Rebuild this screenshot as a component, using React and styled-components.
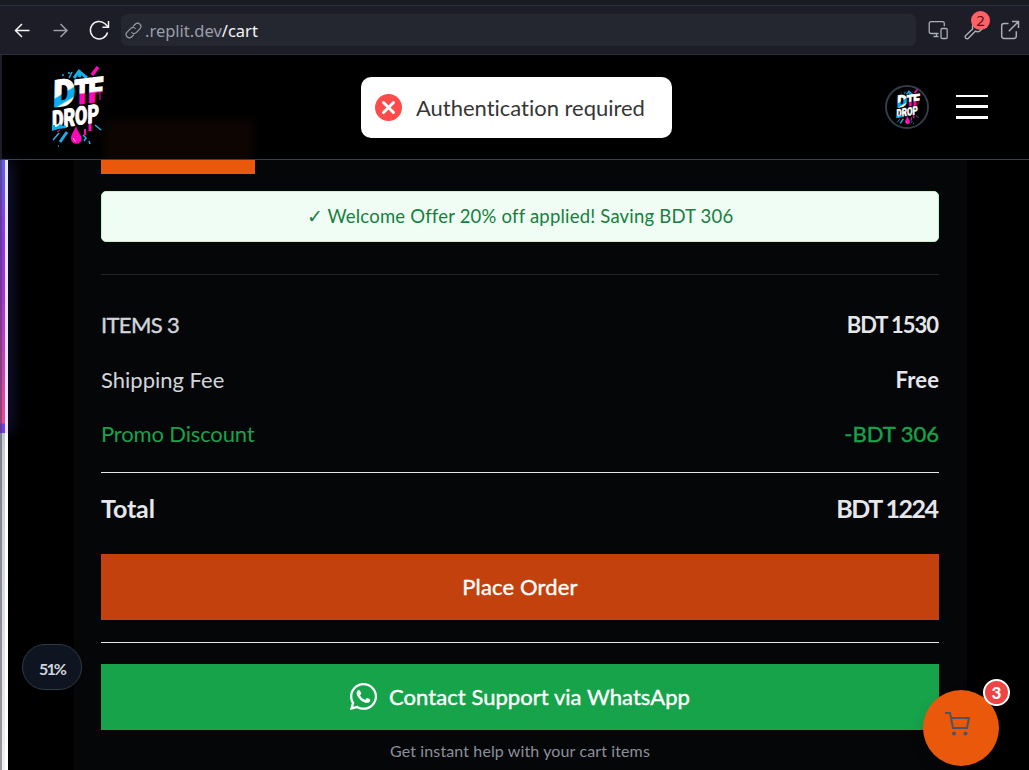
import React from "react";
import styled, { createGlobalStyle, css } from "styled-components";
import { FaWhatsapp } from "react-icons/fa";

const GlobalStyle = createGlobalStyle`
  * { box-sizing: border-box; }
  body {
    margin: 0;
    background: #000;
    color: #e5e7eb;
    font-family: Lato, "Liberation Sans", sans-serif;
    font-variant-ligatures: none;
    overflow: hidden;
  }
`;

const Page = styled.div`
  position: relative;
  display: flex;
  flex-direction: column;
  height: 770px;
  overflow: hidden;
`;

const BrowserBar = styled.div`
  display: flex;
  align-items: center;
  flex: none;
  height: 55px;
  padding: 6px 9px 0 12px;
  background: linear-gradient(#191b23 5px, #2b2d38 5px, #2b2d38 6px, #1c1d26 6px);
  border-bottom: 1px solid #2b2d38;
  color: #f5f5f7;
`;

const NavIcon = styled.svg`
  flex: none;
  width: ${(p) => p.$size || 20}px;
  height: ${(p) => p.$size || 20}px;
  margin-left: ${(p) => p.$gap || 0}px;
  fill: none;
  stroke: ${(p) => p.$color || "#f5f5f7"};
  stroke-width: ${(p) => p.$stroke || 1.5};
`;

const AddressField = styled.div`
  display: flex;
  align-items: center;
  width: 797px;
  height: 32px;
  margin-left: 11px;
  padding-left: 4px;
  border-radius: 6px;
  background: #252730;
  color: #9b9da9;
  font-family: "Noto Sans", sans-serif;
  font-size: 16.5px;
  letter-spacing: ${(p) => p.$spacing}px;

  b { color: #f5f5f7; font-weight: 400; }
  svg { margin-right: 3px; }
`;

const ToolWithBadge = styled.div`
  position: relative;
  display: flex;
`;

const ToolBadge = styled.span`
  position: absolute;
  left: 23px;
  top: -9px;
  width: 19px;
  height: 19px;
  border-radius: 50%;
  background: #ff6166;
  color: #5c1013;
  font: 15px/19px "Noto Sans", sans-serif;
  text-align: center;
`;

const SiteHeader = styled.header`
  display: flex;
  align-items: center;
  flex: none;
  height: 105px;
  padding: 0 41px 2px 43px;
  border-bottom: 1px solid #374151;
  border-left: 2px solid #1c1d26;
  background:
    linear-gradient(90deg, #000 97px, transparent 107px 246px, #000 258px),
    linear-gradient(transparent 58px, #0c0502 72px);
  background-color: #000;
`;

const Avatar = styled.div`
  display: flex;
  align-items: center;
  justify-content: center;
  width: 44px;
  height: 44px;
  margin: 2px 0 0 auto;
  border: 2px solid #333c4b;
  border-radius: 50%;
`;

const MenuButton = styled.div`
  display: flex;
  flex-direction: column;
  justify-content: space-between;
  width: 32px;
  height: 24px;
  margin: 2px 0 0 27px;

  i { height: 3px; background: #fff; }
  i:first-child { height: 2px; }
`;

const Toast = styled.div`
  position: absolute;
  left: 361px;
  top: 77px;
  display: flex;
  align-items: center;
  width: 311px;
  height: 61px;
  padding-left: 14px;
  border-radius: 10px;
  background: #fff;
  color: #363636;
  font-size: 22px;
  letter-spacing: ${(p) => p.$spacing}px;

  svg { margin-right: 14px; }
`;

const Body = styled.div`
  display: flex;
  flex: 1;
  min-height: 0;
`;

const Rail = styled.div`
  flex: none;
  width: 8px;
  margin-right: 66px;
  background: linear-gradient(90deg, rgba(20, 22, 34, 0.4) 2px, transparent 2px 5px, #fff 5px),
    linear-gradient(#b8bcc4 0, #c8cad0 270px, #f0f0f2 610px);
`;

const RailFill = styled.div`
  height: 273px;
  background:
    linear-gradient(90deg, rgba(60, 60, 75, 0.5) 2px, transparent 2px 5px, #e4e7fd 5px),
    linear-gradient(#655cee 0, #9333ea 80px, #a52fdd 125px, #ec4899 255px, #ec4899 263px, #7c3aed 264px);
  box-shadow: 3px 0 14px rgba(79, 90, 240, 0.3);
`;

const Panel = styled.main`
  display: flex;
  flex-direction: column;
  width: 893px;
  padding: 0 28px 0 27px;
  background: #050608;
`;

const ApplyButton = styled.div`
  flex: none;
  width: 154px;
  height: 14px;
  background: #ea580c;
`;

const OfferNotice = styled.div`
  flex: none;
  height: 51px;
  margin: 17px 0 32px;
  border: 1px solid #bbf7d0;
  border-radius: 5px;
  background: #f0fdf4;
  color: #15803d;
  font-size: 18.5px;
  line-height: 49px;
  text-align: center;
  letter-spacing: ${(p) => p.$spacing}px;
`;

const Rule = styled.div`
  flex: none;
  height: 1px;
  margin-top: ${(p) => p.$gap || 0}px;
  background: ${(p) => p.$color || "#e5e7eb"};
`;

const SummaryRow = styled.div`
  display: flex;
  align-items: center;
  justify-content: space-between;
  flex: none;
  height: 30px;
  padding-bottom: 2px;
  margin-top: ${(p) => p.$gap}px;
  color: ${(p) => p.$color || "#d1d5db"};
  font-size: 22px;
  white-space: nowrap;
  ${(p) => p.$total && css`
    padding-bottom: 3px;
    color: #e5e7eb;
    font-size: 25px;
    font-weight: 700;
  `}
`;

const Label = styled.span`
  letter-spacing: ${(p) => p.$spacing || 0}px;
  -webkit-text-stroke: ${(p) => (p.$medium ? "0.4px currentColor" : "0")};
`;

const Amount = styled.span`
  color: ${(p) => p.$color || "#e5e7eb"};
  font-weight: ${(p) => (p.$medium ? 400 : 700)};
  letter-spacing: ${(p) => p.$spacing || 0}px;
  margin-right: ${(p) => -(p.$spacing || 0)}px;
  -webkit-text-stroke: ${(p) => (p.$medium ? "0.4px currentColor" : "0")};
`;

const ActionButton = styled.div`
  display: flex;
  align-items: center;
  justify-content: center;
  gap: 10px;
  flex: none;
  height: 66px;
  padding: 0 ${(p) => p.$shift || 0}px 1px 0;
  margin-top: ${(p) => p.$gap}px;
  background: ${(p) => p.$color};
  color: #fff;
  font-size: 22px;
`;

const HelpNote = styled.div`
  margin-top: 11px;
  color: #8b909b;
  font-size: 16px;
  line-height: 20px;
  text-align: center;
  letter-spacing: ${(p) => p.$spacing}px;
`;

const ScrollPill = styled.div`
  position: absolute;
  left: 22px;
  top: 644px;
  width: 60px;
  height: 46px;
  border: 1px solid #303947;
  border-radius: 23px;
  background: #0e1521;
  color: #d1d5db;
  font-size: 16px;
  font-weight: 700;
  line-height: 48px;
  letter-spacing: -1.9px;
  text-align: center;
`;

const CartButton = styled.div`
  position: absolute;
  left: 923px;
  top: 690px;
  width: 76px;
  height: 76px;
  padding: 21px 0 0 21px;
  border-radius: 50%;
  background: #ea580c;
  box-shadow: 0 8px 14px rgba(0, 0, 0, 0.15);
`;

const CartCount = styled.span`
  position: absolute;
  left: 60px;
  top: -11px;
  width: 27px;
  height: 27px;
  border: 2px solid #fff;
  border-radius: 50%;
  background: #ef4444;
  color: #fff;
  font-size: 17px;
  font-weight: 900;
  line-height: 23px;
  text-align: center;
`;

const LogoDrawing = styled.svg`
  flex: none;
  overflow: visible;
`;

function Logo({ width, height, id }) {
  return (
    <LogoDrawing width={width} height={height} viewBox="0 0 60 84">
      <defs>
        <linearGradient id={id + "d"} x1="0" y1="0" x2="0.25" y2="1">
          <stop offset="0.56" stopColor="#fff" />
          <stop offset="0.6" stopColor="#08aef0" />
          <stop offset="0.78" stopColor="#08aef0" />
          <stop offset="0.82" stopColor="#fff" />
        </linearGradient>
        <linearGradient id={id + "t"} x1="0" y1="0" x2="0" y2="1">
          <stop offset="0.53" stopColor="#fff" />
          <stop offset="0.57" stopColor="#ff08ba" />
        </linearGradient>
      </defs>
      <g stroke="#18aee8" strokeWidth="3" fill="none">
        <path d="M29 14l6-8 M34 13l2-4 6 5" />
        <path d="M24 14l3-6" strokeWidth="1.500" />
        <path d="M18 10v2 M24 8v2" strokeWidth="1.500" />
        <path d="M15 78l7-10" strokeWidth="3" />
        <path d="M8 76l6-7 M50 61l6 5 M38 71l3 3-2 3 M44 77l1 3 M13 82h1" strokeWidth="1.600" />
      </g>
      <g stroke="#ff08ba" fill="none">
        <path d="M47 11l6-8" strokeWidth="3.600" />
        <path d="M45 56v11" strokeWidth="3" />
        <path d="M40 65v6" strokeWidth="2" />
        <path d="M55 27v9 M12 68l3-2" strokeWidth="1" />
      </g>
      <g fontFamily="Roboto, sans-serif" fontWeight="900">
        <g transform="translate(8 43) skewY(-7) skewX(-1)">
          <text x="0" y="0" fontSize="37" textLength="22" lengthAdjust="spacingAndGlyphs" fill={`url(#${id}d)`} stroke={`url(#${id}d)`} strokeWidth="1.200">D</text>
          <text x="21" y="0" fontSize="34" textLength="16" lengthAdjust="spacingAndGlyphs" fill={`url(#${id}t)`} stroke={`url(#${id}t)`} strokeWidth="1.400">T</text>
          <text x="35" y="0" fontSize="34" textLength="15" lengthAdjust="spacingAndGlyphs" fill={`url(#${id}t)`} stroke={`url(#${id}t)`} strokeWidth="1.400">F</text>
        </g>
        <text transform="translate(7 65) skewY(-9)" fontSize="25" textLength="47" lengthAdjust="spacingAndGlyphs" fill="#fff" stroke="#fff" strokeWidth="0.900">DROP</text>
      </g>
      <path d="M7 61h3v2l3-1 2-2 3 2 2-1 2 3-9 1-6 2z" fill="#08aef0" />
      <path d="M31 62C28 69 26 71 26 74.500a5.300 5.300 0 0 0 10.600 0C36.600 71 33 69 31 62z" fill="#ff08ba" />
      <path d="M28.500 74c0 2 1 3 2 3" stroke="#fff" strokeWidth="0.700" fill="none" />
    </LogoDrawing>
  );
}

export default function App() {
  return (
    <>
      <GlobalStyle />
      <Page>
        <BrowserBar>
          <NavIcon viewBox="0 0 20 20"><path d="M17.500 10.500H4M10 4l-6.500 6.500L10 17" /></NavIcon>
          <NavIcon viewBox="0 0 20 20" $gap={18} $color="#9b9da9"><path d="M3.500 10.500H17M10.500 4l6.500 6.500-6.500 6.500" /></NavIcon>
          <NavIcon viewBox="0 0 22 22" $size={22} $gap={18}>
            <path d="M19.500 13.500A8.700 8.700 0 1 1 17 4.800L20.300 8M20.500 2v6.300H14.500" />
          </NavIcon>
          <AddressField $spacing={0}>
            <NavIcon viewBox="0 0 24 24" $size={17} $color="#9b9da9" $stroke={1.6}>
              <path d="M9 14.500a4.500 4.500 0 0 0 6.800.5l5.200-5.200a4.600 4.600 0 0 0-6.600-6.600l-3 3M15 9.500a4.500 4.500 0 0 0-6.800-.5L3 14.200a4.600 4.600 0 0 0 6.600 6.600l3-3" />
            </NavIcon>
            .replit.dev<b>/cart</b>
          </AddressField>
          <NavIcon viewBox="0 0 20 20" $gap={12} $color="#aaacb7" $stroke={1.3}>
            <path d="M10.500 13.500H3A1.800 1.800 0 0 1 1.200 11.700V3.500A1.800 1.800 0 0 1 3 1.700h11.500a1.800 1.800 0 0 1 1.800 1.800v2.700M8.500 13.500v3M5.500 16.500h5" />
            <rect x="13" y="8.500" width="6.200" height="10" rx="1.200" />
          </NavIcon>
          <ToolWithBadge>
            <NavIcon viewBox="0 0 20 20" $gap={16} $color="#aaacb7" $stroke={1.4}>
              <path d="M14.500 2a5 5 0 0 0-5.700 6.700L1.800 15.500a1.800 1.800 0 0 0 2.600 2.700l7-7A5 5 0 0 0 18.200 5l-3 3-2.700-2.700z" />
            </NavIcon>
            <ToolBadge>2</ToolBadge>
          </ToolWithBadge>
          <NavIcon viewBox="0 0 20 20" $gap={16} $color="#aaacb7" $stroke={1.5}>
            <path d="M8.500 3.500H4A2.300 2.300 0 0 0 1.700 5.800v10.400A2.300 2.300 0 0 0 4 18.500h10a2.300 2.300 0 0 0 2.300-2.300v-5M12 1.500h6.500V8M18.500 1.500L8.800 11.200" />
          </NavIcon>
        </BrowserBar>

        <SiteHeader>
          <Logo id="main" width={60} height={84} />
          <Avatar><Logo id="avatar" width={28} height={38} /></Avatar>
          <MenuButton><i /><i /><i /></MenuButton>
        </SiteHeader>

        <Body>
          <Rail><RailFill /></Rail>
          <Panel>
            <ApplyButton />
            <OfferNotice $spacing={0.2}>✓ Welcome Offer 20% off applied! Saving BDT 306</OfferNotice>
            <Rule $color="#242527" />
            <SummaryRow $gap={35}>
              <Label $medium $spacing={-0.65}>ITEMS 3</Label><Amount $spacing={-1.05}>BDT 1530</Amount>
            </SummaryRow>
            <SummaryRow $gap={25}>
              <Label>Shipping Fee</Label><Amount $spacing={0.2}>Free</Amount>
            </SummaryRow>
            <SummaryRow $gap={24} $color="#16a34a">
              <Label $spacing={-0.15}>Promo Discount</Label>
              <Amount $medium $color="#16a34a">-BDT 306</Amount>
            </SummaryRow>
            <Rule $gap={23} />
            <SummaryRow $gap={21} $total>
              <Label $spacing={-0.1}>Total</Label><Amount $spacing={-1.5}>BDT 1224</Amount>
            </SummaryRow>
            <ActionButton $gap={30} $color="#c2410c"><Label $medium $spacing={0.15}>Place Order</Label></ActionButton>
            <Rule $gap={22} />
            <ActionButton $gap={21} $shift={2} $color="#16a34a">
              <FaWhatsapp size={31} /><Label $medium $spacing={0.05}>Contact Support via WhatsApp</Label>
            </ActionButton>
            <HelpNote $spacing={0.12}>Get instant help with your cart items</HelpNote>
          </Panel>
        </Body>

        <Toast $spacing={-0.02}>
          <svg width="27" height="27" viewBox="0 0 27 27">
            <circle cx="13.500" cy="13.500" r="13.500" fill="#ff4b4b" />
            <path d="M8.500 8.500l10 10M18.500 8.500l-10 10" stroke="#fff" strokeWidth="2.900" strokeLinecap="round" />
          </svg>
          Authentication required
        </Toast>
        <ScrollPill>51%</ScrollPill>
        <CartButton>
          <svg width="28" height="26" viewBox="0 0 28 26" fill="none" stroke="#4b5563" strokeWidth="2">
            <path d="M1 2h5l3 15h14l2-10H7" />
            <circle cx="10" cy="22.500" r="2" fill="#4b5563" stroke="none" />
            <circle cx="21.500" cy="22.500" r="2" fill="#4b5563" stroke="none" />
          </svg>
          <CartCount>3</CartCount>
        </CartButton>
      </Page>
    </>
  );
}
